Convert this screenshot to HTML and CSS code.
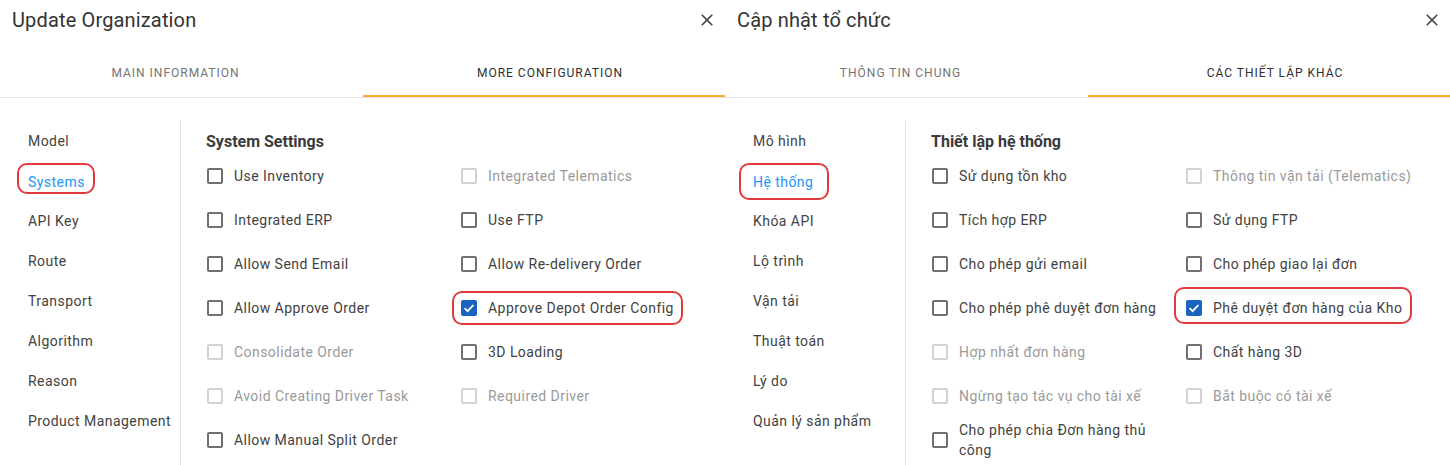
FILE: index.html
```html
<!DOCTYPE html>
<html lang="en">
<head>
<meta charset="utf-8">
<title>Update Organization</title>
<link rel="stylesheet" href="styles.css">
</head>
<body>
<div class="screens">

  <section class="dialog">
    <header class="dialog-head">
      <h2 class="dialog-title">Update Organization</h2>
      <button class="close" aria-label="Close">
        <svg viewBox="0 0 24 24" width="20" height="20"><path d="M19 6.41L17.59 5 12 10.59 6.41 5 5 6.41 10.59 12 5 17.59 6.41 19 12 13.41 17.59 19 19 17.59 13.41 12z" fill="currentColor"/></svg>
      </button>
    </header>
    <nav class="tabs">
      <div class="tab tab-first">MAIN INFORMATION</div>
      <div class="tab tab-second tab-active">MORE CONFIGURATION</div>
    </nav>
    <div class="dialog-body">
      <ul class="side-menu">
        <li class="side-item">Model</li>
        <li class="side-item side-item-active"><span class="mark mark-systems">Systems</span></li>
        <li class="side-item">API Key</li>
        <li class="side-item">Route</li>
        <li class="side-item">Transport</li>
        <li class="side-item">Algorithm</li>
        <li class="side-item">Reason</li>
        <li class="side-item">Product Management</li>
      </ul>
      <div class="settings">
        <h3 class="settings-title">System Settings</h3>
        <div class="settings-grid">
          <label class="check"><span class="box"></span><span class="check-text">Use Inventory</span></label>
          <label class="check check-disabled"><span class="box"></span><span class="check-text">Integrated Telematics</span></label>
          <label class="check"><span class="box"></span><span class="check-text">Integrated ERP</span></label>
          <label class="check"><span class="box"></span><span class="check-text">Use FTP</span></label>
          <label class="check"><span class="box"></span><span class="check-text">Allow Send Email</span></label>
          <label class="check"><span class="box"></span><span class="check-text">Allow Re-delivery Order</span></label>
          <label class="check"><span class="box"></span><span class="check-text">Allow Approve Order</span></label>
          <label class="check check-on mark-row mark-depot-en"><span class="box"><svg viewBox="0 0 16 16" width="16" height="16"><path d="M3.6 8.2l3 3 5.8-6.2" fill="none" stroke="#fff" stroke-width="1.8"/></svg></span><span class="check-text">Approve Depot Order Config</span></label>
          <label class="check check-disabled"><span class="box"></span><span class="check-text">Consolidate Order</span></label>
          <label class="check"><span class="box"></span><span class="check-text">3D Loading</span></label>
          <label class="check check-disabled"><span class="box"></span><span class="check-text">Avoid Creating Driver Task</span></label>
          <label class="check check-disabled"><span class="box"></span><span class="check-text">Required Driver</span></label>
          <label class="check"><span class="box"></span><span class="check-text">Allow Manual Split Order</span></label>
        </div>
      </div>
    </div>
  </section>

  <section class="dialog" lang="vi">
    <header class="dialog-head">
      <h2 class="dialog-title">Cập nhật tổ chức</h2>
      <button class="close" aria-label="Đóng">
        <svg viewBox="0 0 24 24" width="20" height="20"><path d="M19 6.41L17.59 5 12 10.59 6.41 5 5 6.41 10.59 12 5 17.59 6.41 19 12 13.41 17.59 19 19 17.59 13.41 12z" fill="currentColor"/></svg>
      </button>
    </header>
    <nav class="tabs">
      <div class="tab tab-first">THÔNG TIN CHUNG</div>
      <div class="tab tab-second tab-active">CÁC THIẾT LẬP KHÁC</div>
    </nav>
    <div class="dialog-body">
      <ul class="side-menu">
        <li class="side-item">Mô hình</li>
        <li class="side-item side-item-active"><span class="mark mark-hethong">Hệ thống</span></li>
        <li class="side-item">Khóa API</li>
        <li class="side-item">Lộ trình</li>
        <li class="side-item">Vận tải</li>
        <li class="side-item">Thuật toán</li>
        <li class="side-item">Lý do</li>
        <li class="side-item">Quản lý sản phẩm</li>
      </ul>
      <div class="settings">
        <h3 class="settings-title">Thiết lập hệ thống</h3>
        <div class="settings-grid">
          <label class="check"><span class="box"></span><span class="check-text">Sử dụng tồn kho</span></label>
          <label class="check check-disabled"><span class="box"></span><span class="check-text">Thông tin vận tải (Telematics)</span></label>
          <label class="check"><span class="box"></span><span class="check-text">Tích hợp ERP</span></label>
          <label class="check"><span class="box"></span><span class="check-text">Sử dụng FTP</span></label>
          <label class="check"><span class="box"></span><span class="check-text">Cho phép gửi email</span></label>
          <label class="check"><span class="box"></span><span class="check-text">Cho phép giao lại đơn</span></label>
          <label class="check"><span class="box"></span><span class="check-text">Cho phép phê duyệt đơn hàng</span></label>
          <label class="check check-on mark-row mark-depot-vi"><span class="box"><svg viewBox="0 0 16 16" width="16" height="16"><path d="M3.6 8.2l3 3 5.8-6.2" fill="none" stroke="#fff" stroke-width="1.8"/></svg></span><span class="check-text">Phê duyệt đơn hàng của Kho</span></label>
          <label class="check check-disabled"><span class="box"></span><span class="check-text">Hợp nhất đơn hàng</span></label>
          <label class="check"><span class="box"></span><span class="check-text">Chất hàng 3D</span></label>
          <label class="check check-disabled"><span class="box"></span><span class="check-text">Ngừng tạo tác vụ cho tài xế</span></label>
          <label class="check check-disabled"><span class="box"></span><span class="check-text">Bắt buộc có tài xế</span></label>
          <label class="check"><span class="box"></span><span class="check-text">Cho phép chia Đơn hàng thủ<br>công</span></label>
        </div>
      </div>
    </div>
  </section>

</div>
</body>
</html>
```

FILE: styles.css
```css
* { box-sizing: border-box; }

html, body {
  margin: 0;
  padding: 0;
  background: #ffffff;
}

body {
  font-family: Roboto, "Noto Sans", "Liberation Sans", sans-serif;
  color: #424242;
  width: 1450px;
  height: 465px;
  overflow: hidden;
}

.screens {
  display: flex;
  width: 1450px;
  height: 465px;
}

.dialog {
  width: 725px;
  height: 465px;
  display: flex;
  flex-direction: column;
  overflow: hidden;
}

/* header */
.dialog-head {
  height: 39px;
  display: flex;
  align-items: center;
  justify-content: space-between;
  padding: 0 6px 0 12px;
}

.dialog-title {
  margin: 0;
  font-size: 20px;
  line-height: 24px;
  font-weight: 400;
  letter-spacing: 0.15px;
  color: #333333;
}

.close {
  width: 24px;
  height: 24px;
  padding: 0;
  border: 0;
  background: transparent;
  color: #4a4a4a;
  display: flex;
  align-items: center;
  justify-content: center;
}

/* tabs */
.tabs {
  margin-top: 10px;
  display: grid;
  grid-template-columns: 363px 362px;
  border-bottom: 1px solid #e2e2e2;
}

.tab {
  height: 48px;
  display: flex;
  align-items: center;
  justify-content: center;
  font-size: 12px;
  letter-spacing: 1px;
  color: #757575;
  font-weight: 400;
}

.tab-first { padding-right: 12px; }
.tab-second { padding-left: 12px; }

.tab-active {
  color: #2f2f2f;
  box-shadow: inset 0 -2px 0 #fbad36;
}

/* body */
.dialog-body {
  flex: 1;
  display: flex;
  min-height: 0;
}

.side-menu {
  list-style: none;
  margin: 23px 0 0 0;
  padding: 0 0 0 28px;
  width: 181px;
  border-right: 1px solid #e2e2e2;
}

.side-item {
  height: 40px;
  line-height: 40px;
  font-size: 14px;
  letter-spacing: 0.45px;
  color: #424242;
  white-space: nowrap;
}

.side-item-active { color: #2196f3; }

.mark {
  position: relative;
  display: inline-block;
  line-height: 20px;
  vertical-align: middle;
}

.mark::after,
.mark-row::after {
  content: "";
  position: absolute;
  border: 2px solid #e23b3f;
  border-radius: 10px;
  pointer-events: none;
}

.mark-systems::after { left: -11px; right: -10px; top: -9px; bottom: -2px; }
.mark-hethong::after { left: -14px; right: -16px; top: -9px; bottom: -8px; }

.settings {
  flex: 1;
  padding: 34px 0 0 25px;
}

.settings-title {
  margin: 0;
  font-size: 16px;
  line-height: 20px;
  font-weight: 700;
  color: #3a3a3a;
}

.settings-grid {
  margin-top: 2px;
  padding-left: 1px;
  display: grid;
  grid-template-columns: 254px 254px;
  grid-auto-rows: minmax(44px, auto);
}

.check {
  position: relative;
  display: flex;
  align-items: center;
  justify-self: start;
  gap: 11px;
  font-size: 14px;
  line-height: 20px;
  letter-spacing: 0.45px;
  color: #424242;
}

.box {
  flex: none;
  width: 16px;
  height: 16px;
  border: 2px solid #707070;
  border-radius: 2px;
  display: flex;
  align-items: center;
  justify-content: center;
}

.check-disabled { color: #9a9a9a; }
.check-disabled .box { border-color: #d2d2d2; }

.check-on .box {
  border: 0;
  background: #1b63c0;
}

.mark-depot-en::after { left: -9px; right: -9px; top: 5px; bottom: 5px; }
.mark-depot-vi::after { left: -12px; right: -10px; top: 1px; bottom: 6px; }
```
